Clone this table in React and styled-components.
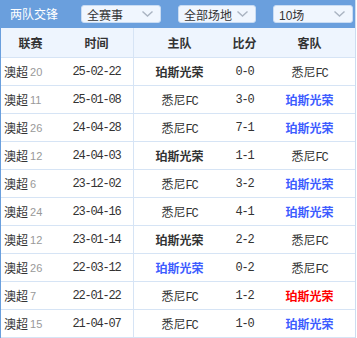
import React from "react";
import styled, { createGlobalStyle } from "styled-components";

const GlobalStyle = createGlobalStyle`
  body {
    margin: 0;
    background: #ffffff;
    font-family: "Noto Sans CJK SC", "Liberation Sans", sans-serif;
  }
`;

const CJK = `"Noto Sans CJK SC", "Liberation Sans", sans-serif`;
const MONO = `"Liberation Mono", "Noto Sans CJK SC", monospace`;

const Panel = styled.div`
  width: 356px;
  box-sizing: border-box;
  border-left: 1px solid #6a9fdd;
  border-right: 1px solid #cddcf0;
`;

const TopBar = styled.div`
  height: 28px;
  background: #6a9fdd;
  display: flex;
  align-items: center;
  padding-left: 9px;
`;

const Title = styled.div`
  color: #ffffff;
  font-family: ${CJK};
  font-size: 12px;
  width: 70px;
  line-height: 28px;
`;

const Select = styled.div`
  width: ${(p) => p.$w}px;
  height: 18px;
  margin-left: ${(p) => p.$ml}px;
  box-sizing: border-box;
  border: 1px solid #c9dcf3;
  border-radius: 3px;
  background: #f0f6fe;
  display: flex;
  align-items: center;
  justify-content: space-between;
  padding: 0 7px 0 5px;
  font-family: ${CJK};
  font-size: 12px;
  color: #333333;
`;

const Digits = styled.span`
  font-family: "Liberation Sans", sans-serif;
  font-size: 12px;
`;

const Chevron = () => (
  <svg width="11" height="6" viewBox="0 0 11 6">
    <path d="M0.5 0.5 L5.5 5 L10.5 0.5" fill="none" stroke="#aab4c2" strokeWidth="1.4" />
  </svg>
);

const Row = styled.div`
  display: grid;
  grid-template-columns: 59px 74px 91px 39px 91px;
  height: ${(p) => (p.$head ? 29 : 27)}px;
  border-bottom: 1px solid #d6e4f5;
  background: ${(p) => (p.$head ? "#eef5fe" : "#ffffff")};
`;

const Cell = styled.div`
  display: flex;
  align-items: center;
  justify-content: ${(p) => (p.$left ? "flex-start" : "center")};
  padding-left: ${(p) => (p.$left ? 3 : 0)}px;
  border-right: ${(p) => (p.$divider ? "1px solid #d6e4f5" : "none")};
  font-family: ${CJK};
  font-size: 12px;
  color: #333333;
  white-space: nowrap;
`;

const HeadCell = styled(Cell)`
  font-weight: bold;
`;

const League = styled.span`
  font-family: ${CJK};
  font-size: 12px;
  color: #333333;
`;

const Round = styled.span`
  font-family: "Liberation Sans", sans-serif;
  font-size: 11px;
  color: #999999;
  margin-left: 2px;
`;

const Mono = styled.span`
  font-family: ${MONO};
  font-size: 12px;
  letter-spacing: -1.2px;
  color: #333333;
`;

const Team = styled.span`
  font-family: ${CJK};
  font-size: 12px;
  font-weight: ${(p) => (p.$bold ? "bold" : "normal")};
  color: ${(p) => p.$color || "#333333"};
`;

const RESULT_COLOR = { d: "#333333", l: "#3d5cff", w: "#ff0000" };

const TeamName = ({ name, result }) =>
  name === "悉尼FC" ? (
    <Team>
      悉尼<Mono>FC</Mono>
    </Team>
  ) : (
    <Team $bold $color={RESULT_COLOR[result]}>
      {name}
    </Team>
  );

const matches = [
  { round: 20, date: "25-02-22", home: "珀斯光荣", score: "0-0", away: "悉尼FC", r: "d" },
  { round: 11, date: "25-01-08", home: "悉尼FC", score: "3-0", away: "珀斯光荣", r: "l" },
  { round: 26, date: "24-04-28", home: "悉尼FC", score: "7-1", away: "珀斯光荣", r: "l" },
  { round: 12, date: "24-04-03", home: "珀斯光荣", score: "1-1", away: "悉尼FC", r: "d" },
  { round: 6, date: "23-12-02", home: "悉尼FC", score: "3-2", away: "珀斯光荣", r: "l" },
  { round: 24, date: "23-04-16", home: "悉尼FC", score: "4-1", away: "珀斯光荣", r: "l" },
  { round: 12, date: "23-01-14", home: "珀斯光荣", score: "2-2", away: "悉尼FC", r: "d" },
  { round: 26, date: "22-03-12", home: "珀斯光荣", score: "0-2", away: "悉尼FC", r: "l" },
  { round: 7, date: "22-01-22", home: "悉尼FC", score: "1-2", away: "珀斯光荣", r: "w" },
  { round: 15, date: "21-04-07", home: "悉尼FC", score: "1-0", away: "珀斯光荣", r: "l" },
];

export default function App() {
  return (
    <>
      <GlobalStyle />
      <Panel>
        <TopBar>
          <Title>两队交锋</Title>
          <Select $w={80} $ml={1}>
            全赛事
            <Chevron />
          </Select>
          <Select $w={78} $ml={17}>
            全部场地
            <Chevron />
          </Select>
          <Select $w={80} $ml={17}>
            <span>
              <Digits>10</Digits>场
            </span>
            <Chevron />
          </Select>
        </TopBar>

        <Row $head>
          <HeadCell>联赛</HeadCell>
          <HeadCell $divider>时间</HeadCell>
          <HeadCell>主队</HeadCell>
          <HeadCell>比分</HeadCell>
          <HeadCell>客队</HeadCell>
        </Row>

        {matches.map((m, i) => (
          <Row key={i}>
            <Cell $left>
              <League>澳超</League>
              <Round>{m.round}</Round>
            </Cell>
            <Cell $divider>
              <Mono>{m.date}</Mono>
            </Cell>
            <Cell>
              <TeamName name={m.home} result={m.r} />
            </Cell>
            <Cell>
              <Mono>{m.score}</Mono>
            </Cell>
            <Cell>
              <TeamName name={m.away} result={m.r} />
            </Cell>
          </Row>
        ))}
      </Panel>
    </>
  );
}
